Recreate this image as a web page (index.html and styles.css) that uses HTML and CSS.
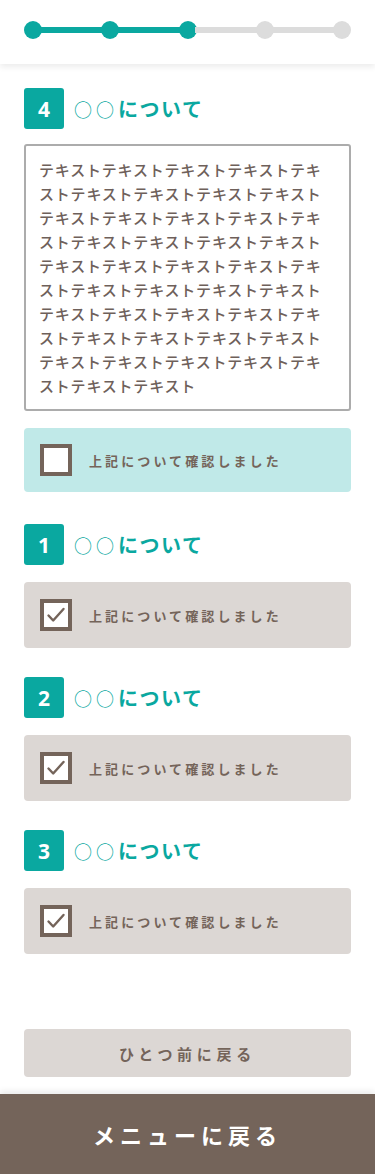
FILE: index.html
```html
<!doctype html>
<html lang="ja">
  <head>
    <meta charset="UTF-8" />
    <title>確認</title>
    <link rel="stylesheet" href="styles.css">
  </head>

  <body>
    <!-- Progress -->
    <header class="progress-header">
      <div class="progress">
        <span class="dot done"></span>
        <span class="bar done"></span>
        <span class="dot done"></span>
        <span class="bar done"></span>
        <span class="dot done"></span>
        <span class="bar"></span>
        <span class="dot"></span>
        <span class="bar"></span>
        <span class="dot"></span>
      </div>
    </header>

    <main class="content">
      <!-- Current item -->
      <section class="item current">
        <h2 class="item-title"><span class="num">4</span><span class="mark">○○</span>について</h2>
        <div class="text-box">テキストテキストテキストテキストテキストテキストテキストテキストテキストテキストテキストテキストテキストテキストテキストテキストテキストテキストテキストテキストテキストテキストテキストテキストテキストテキストテキストテキストテキストテキストテキストテキストテキストテキストテキストテキストテキストテキストテキストテキストテキストテキストテキスト</div>
        <label class="confirm">
          <span class="check-box"></span>
          <span class="confirm-text">上記について確認しました</span>
        </label>
      </section>

      <!-- Already confirmed -->
      <section class="item">
        <h2 class="item-title"><span class="num">1</span><span class="mark">○○</span>について</h2>
        <label class="confirm checked">
          <span class="check-box">
            <svg viewBox="0 0 24 24" width="24" height="24"><path d="M4.5 12.5 L9.2 17.5 L19.5 6" /></svg>
          </span>
          <span class="confirm-text">上記について確認しました</span>
        </label>
      </section>

      <section class="item">
        <h2 class="item-title"><span class="num">2</span><span class="mark">○○</span>について</h2>
        <label class="confirm checked">
          <span class="check-box">
            <svg viewBox="0 0 24 24" width="24" height="24"><path d="M4.5 12.5 L9.2 17.5 L19.5 6" /></svg>
          </span>
          <span class="confirm-text">上記について確認しました</span>
        </label>
      </section>

      <section class="item">
        <h2 class="item-title"><span class="num">3</span><span class="mark">○○</span>について</h2>
        <label class="confirm checked">
          <span class="check-box">
            <svg viewBox="0 0 24 24" width="24" height="24"><path d="M4.5 12.5 L9.2 17.5 L19.5 6" /></svg>
          </span>
          <span class="confirm-text">上記について確認しました</span>
        </label>
      </section>

      <button class="back-button" type="button">ひとつ前に戻る</button>
    </main>

    <footer class="menu-bar">
      <button class="menu-button" type="button">メニューに戻る</button>
    </footer>
  </body>
</html>
```

FILE: styles.css
```css
body {
  margin: 0;
  font-family: "Noto Sans CJK JP", "Noto Sans", sans-serif;
  color: #74645a;
  background-color: #ffffff;
}

.progress-header {
  height: 64px;
  box-sizing: border-box;
  padding: 21px 24px 0;
  background-color: #ffffff;
  box-shadow: 0 3px 6px rgba(0, 0, 0, 0.08);
  position: relative;
}

.progress {
  display: flex;
  align-items: center;
}

.dot {
  width: 18px;
  height: 18px;
  border-radius: 50%;
  background-color: #dcdcdc;
  flex-shrink: 0;
}

.bar {
  flex: 1;
  height: 6px;
  margin: 0 -2px;
  background-color: #dcdcdc;
}

.dot.done,
.bar.done {
  background-color: #0aa8a0;
}

.content {
  padding: 24px 24px 17px;
}

.item {
  margin-bottom: 29px;
}

.item.current {
  margin-bottom: 32px;
}

.item-title {
  display: flex;
  align-items: center;
  height: 41px;
  margin: 0 0 17px;
  font-size: 20px;
  font-weight: bold;
  letter-spacing: 1.5px;
  color: #0aa8a0;
}

.current .item-title {
  margin-bottom: 15px;
}

.mark {
  font-size: 18px;
  font-weight: normal;
  letter-spacing: 4px;
}

.num {
  display: flex;
  align-items: center;
  justify-content: center;
  width: 40px;
  height: 41px;
  margin-right: 10px;
  border-radius: 3px;
  background-color: #0aa8a0;
  color: #ffffff;
  font-family: "Open Sans", "Noto Sans", sans-serif;
  font-size: 21px;
  font-weight: bold;
  letter-spacing: 0;
}

.text-box {
  height: 267px;
  box-sizing: border-box;
  padding: 12px 14px 11px 13px;
  border: 2px solid #acacac;
  border-radius: 3px;
  font-size: 15px;
  font-weight: 500;
  line-height: 24px;
  letter-spacing: 0.8px;
  color: #6e605a;
  overflow: hidden;
  margin-bottom: 17px;
}

.confirm {
  display: flex;
  align-items: center;
  height: 64px;
  padding: 0 16px;
  border-radius: 4px;
  background-color: #c0e9e8;
  cursor: pointer;
}

.confirm.checked {
  height: 66px;
  background-color: #dcd7d4;
}

.check-box {
  display: flex;
  align-items: center;
  justify-content: center;
  width: 32px;
  height: 32px;
  box-sizing: border-box;
  border: 4px solid #74645a;
  background-color: #ffffff;
  flex-shrink: 0;
}

.check-box svg path {
  fill: none;
  stroke: #74645a;
  stroke-width: 2.4;
  stroke-linecap: round;
  stroke-linejoin: round;
}

.confirm-text {
  margin-left: 17px;
  font-size: 13px;
  font-weight: bold;
  letter-spacing: 3.1px;
  color: #74645a;
}

.back-button {
  display: block;
  width: 100%;
  height: 48px;
  margin-top: 75px;
  border: none;
  border-radius: 4px;
  background-color: #dcd7d4;
  font-family: inherit;
  font-size: 15px;
  font-weight: bold;
  letter-spacing: 4.7px;
  color: #74645a;
  cursor: pointer;
}

.menu-bar {
  box-shadow: 0 -3px 6px rgba(0, 0, 0, 0.08);
}

.menu-button {
  display: block;
  width: 100%;
  height: 80px;
  border: none;
  background-color: #74645a;
  font-family: inherit;
  font-size: 22px;
  font-weight: bold;
  letter-spacing: 5px;
  color: #ffffff;
  cursor: pointer;
}
```
